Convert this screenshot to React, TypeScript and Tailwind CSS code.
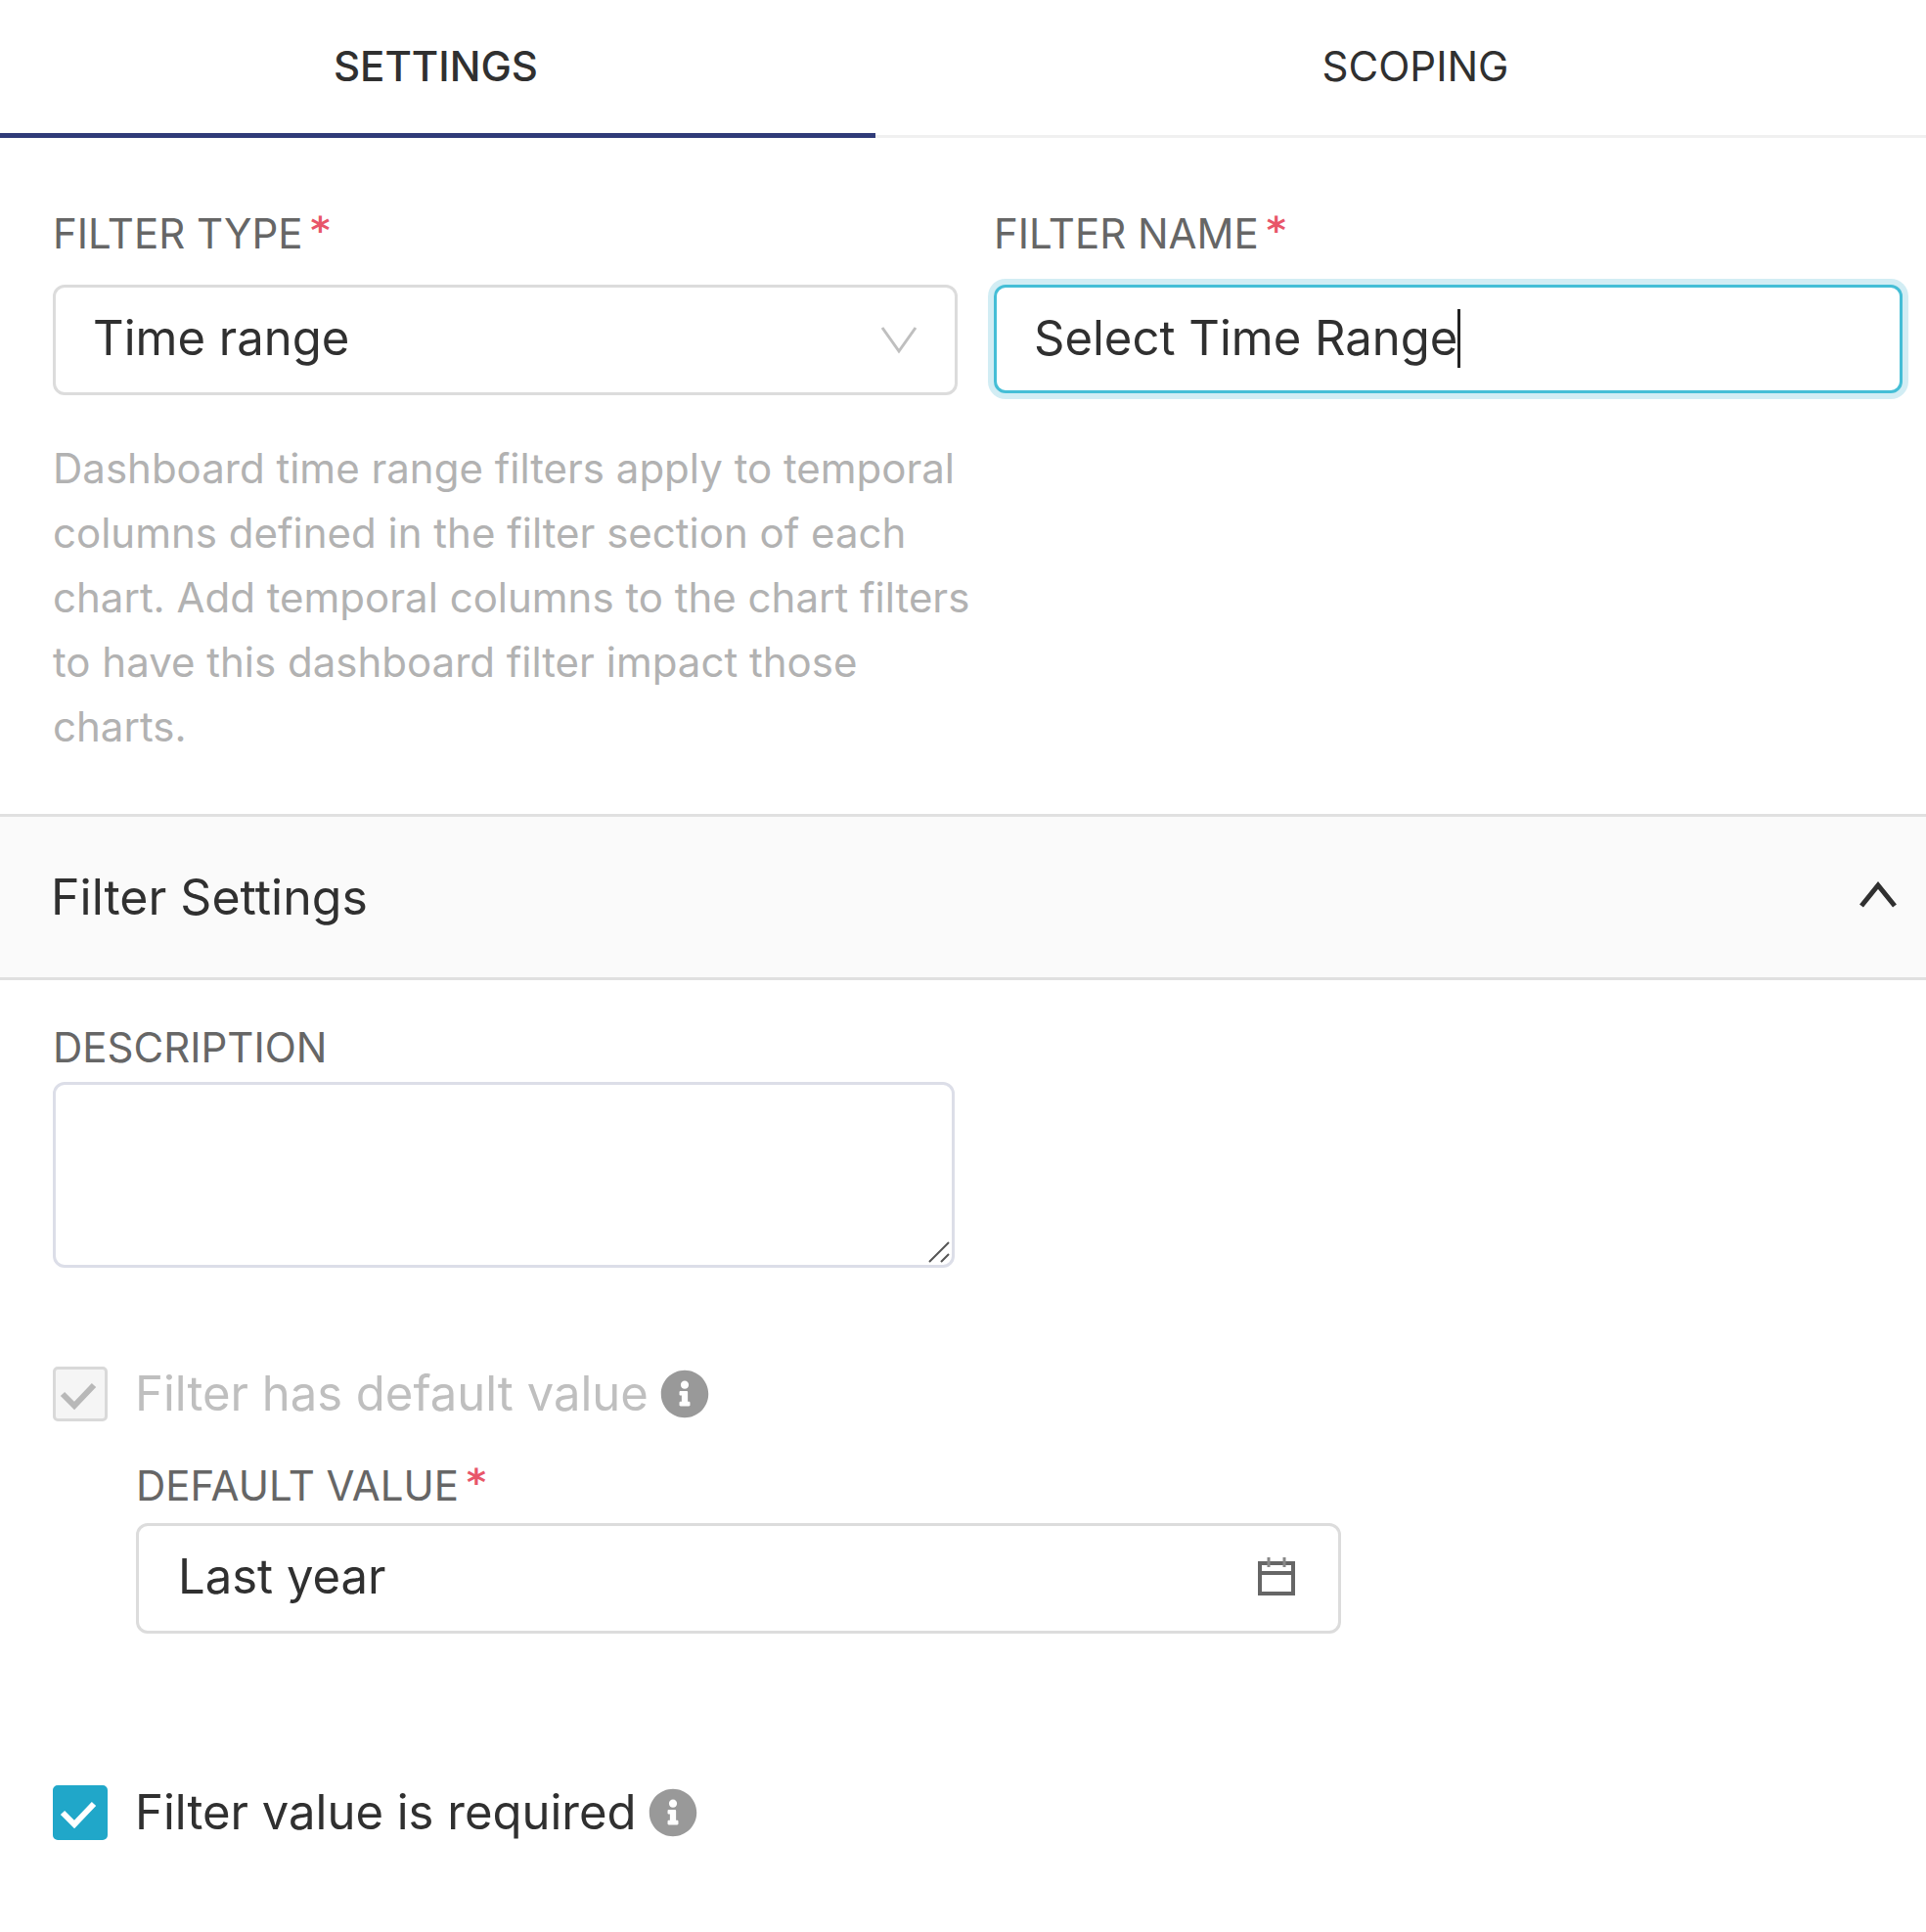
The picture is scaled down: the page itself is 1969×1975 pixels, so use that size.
import { useState } from "react";

const label = "block text-[42px] leading-[48px] text-[#666666]";
const field = "block w-full h-[113px] rounded-[12px] border-[3px] border-[#dcdcdc] bg-white pb-1 text-[49px] text-[#303030] outline-none";

function Required() {
  return (
    <span className="ml-2 inline-block align-[6px] font-['DejaVu_Sans'] text-[38px] leading-none font-bold text-[#e8566a] h-6" aria-hidden="true">
      *
    </span>
  );
}

function InfoIcon() {
  return (
    <svg className="ml-3 size-[50px] shrink-0" viewBox="0 0 512 512" role="img" aria-label="Information">
      <path fill="#999999" d="M256 8C119.043 8 8 119.083 8 256c0 136.997 111.043 248 248 248s248-111.003 248-248C504 119.083 392.957 8 256 8zm0 110c23.196 0 42 18.804 42 42s-18.804 42-42 42-42-18.804-42-42 18.804-42 42-42zm56 254c0 6.627-5.373 12-12 12h-88c-6.627 0-12-5.373-12-12v-24c0-6.627 5.373-12 12-12h12v-64h-12c-6.627 0-12-5.373-12-12v-24c0-6.627 5.373-12 12-12h64c6.627 0 12 5.373 12 12v100h12c6.627 0 12 5.373 12 12v24z" />
    </svg>
  );
}

function CheckRow({ id, text, disabled, checked, onChange }: { id: string; text: string; disabled?: boolean; checked: boolean; onChange?: () => void }) {
  return (
    <div className="flex h-[60px] items-center">
      <span className="relative size-14 shrink-0">
        <input
          id={id}
          type="checkbox"
          checked={checked}
          disabled={disabled}
          onChange={onChange}
          className="peer block size-14 appearance-none rounded-[5px] border-[3px] border-[#d9d9d9] bg-white checked:border-[#20a7c9] checked:bg-[#20a7c9] disabled:border-[#d9d9d9] disabled:bg-[#f5f5f5]"
        />
        <svg className="pointer-events-none absolute inset-0 hidden size-14 text-white peer-checked:block peer-disabled:text-[#b8b8b8]" viewBox="0 0 56 56" fill="none" stroke="currentColor" strokeWidth="6">
          <path d="M10 28l12 12 20-21" />
        </svg>
      </span>
      <label htmlFor={id} className={disabled ? "ml-[28px] text-[49px] leading-[60px] text-[#bfbfbf]" : "ml-[28px] text-[49px] leading-[60px] text-[#303030]"}>
        {text}
      </label>
      <InfoIcon />
    </div>
  );
}

export default function App() {
  const [tab, setTab] = useState("settings");
  const [name, setName] = useState("Select Time Range");
  const [open, setOpen] = useState(true);
  const [required, setRequired] = useState(true);

  return (
    <main className="min-h-screen bg-white font-['Inter',sans-serif] text-[#303030]">
      <div role="tablist" className="flex h-[141px] border-b-[3px] border-[#f0f0f0]">
        <button
          role="tab"
          aria-selected={tab === "settings"}
          onClick={() => setTab("settings")}
          className="-mb-[3px] w-[895px] border-b-[5px] border-[#2f3b78] pr-1 pb-[2px] text-[42px] font-medium"
        >
          SETTINGS
        </button>
        <button role="tab" aria-selected={tab === "scoping"} onClick={() => setTab("scoping")} className="mr-[74px] ml-[104px] flex-1 pb-1 text-[42px]">
          SCOPING
        </button>
      </div>

      <form onSubmit={(e) => e.preventDefault()}>
        <div className="grid grid-cols-[925fr_929fr] gap-[37px] pt-[74px] pr-6 pl-[54px]">
          <div>
            <label htmlFor="filter-type" className={label}>FILTER TYPE<Required /></label>
            <div className="relative mt-7">
              <select id="filter-type" className={`${field} appearance-none pl-[38px]`}>
                <option>Time range</option>
              </select>
              <svg className="pointer-events-none absolute top-[39px] right-10 h-9 w-10" viewBox="0 0 40 36" fill="none" stroke="#bfbfbf" strokeWidth="3">
                <path d="M3 5l17 24 17-24" />
              </svg>
            </div>
            <p className="mt-[42px] -mr-7 text-[42px] leading-[66px] text-[#b2b2b2]">
              Dashboard time range filters apply to temporal columns defined in the filter section of each chart. Add temporal columns to the chart filters to have this dashboard filter impact those charts.
            </p>
          </div>
          <div>
            <label htmlFor="filter-name" className={label}>FILTER NAME<Required /></label>
            <div className="relative mt-7">
              <input
                id="filter-name"
                value={name}
                onChange={(e) => setName(e.target.value)}
                className="block h-[111px] w-full rounded-[12px] border-[3px] border-[#45bed6] bg-white pb-[2px] pl-[38px] text-[49px] caret-transparent outline-none ring-[6px] ring-[#d2edf4]"
              />
              <span className="pointer-events-none absolute top-[25px] left-[41px] flex h-[60px] items-stretch text-[49px]">
                <span className="invisible">{name}</span>
                <span className="w-[3px] bg-[#222222]" />
              </span>
            </div>
          </div>
        </div>

        <button
          type="button"
          aria-expanded={open}
          onClick={() => setOpen(!open)}
          className="mt-14 flex h-[170px] w-full items-center justify-between border-y-[3px] border-[#e0e0e0] bg-[#fafafa] pr-[29px] pl-[52px] text-[50px]"
        >
          Filter Settings
          <svg className="h-9 w-10" viewBox="0 0 40 36" fill="none" stroke="#303030" strokeWidth="5">
            <path d="M3 27L20 6l17 21" />
          </svg>
        </button>

        {open && (
          <div className="px-[54px] pt-[45px]">
            <div className="w-[922px]">
              <label htmlFor="description" className={label}>DESCRIPTION</label>
              <div className="relative mt-[11px]">
                <textarea id="description" className="block h-[190px] w-full resize-none rounded-[12px] border-[3px] border-[#dcdee8] bg-white p-8 text-[49px] outline-none" />
                <svg className="pointer-events-none absolute right-1 bottom-1 size-6" viewBox="0 0 24 24" stroke="#555555" strokeWidth="2">
                  <path d="M2 22L22 2M14 22l8-8" />
                </svg>
              </div>
            </div>

            <div className="mt-[99px]">
              <CheckRow id="has-default" text="Filter has default value" disabled checked />
            </div>

            <div className="mt-10 ml-[85px] w-[1232px]">
              <label htmlFor="default-value" className={label}>DEFAULT VALUE<Required /></label>
              <div className="relative mt-[14px]">
                <input id="default-value" readOnly value="Last year" className={`${field} pl-[40px]`} />
                <svg className="pointer-events-none absolute top-[33px] right-[46px] h-[42px] w-10" viewBox="0 0 40 42" fill="none" stroke="#666666">
                  <path strokeWidth="4" d="M3 8h34v31H3zM3 18h34" />
                  <path strokeWidth="3" stroke="#888888" d="M12 2v10M28 2v10" />
                </svg>
              </div>
            </div>

            <div className="mt-[153px]">
              <CheckRow id="required" text="Filter value is required" checked={required} onChange={() => setRequired(!required)} />
            </div>
          </div>
        )}
      </form>
    </main>
  );
}
